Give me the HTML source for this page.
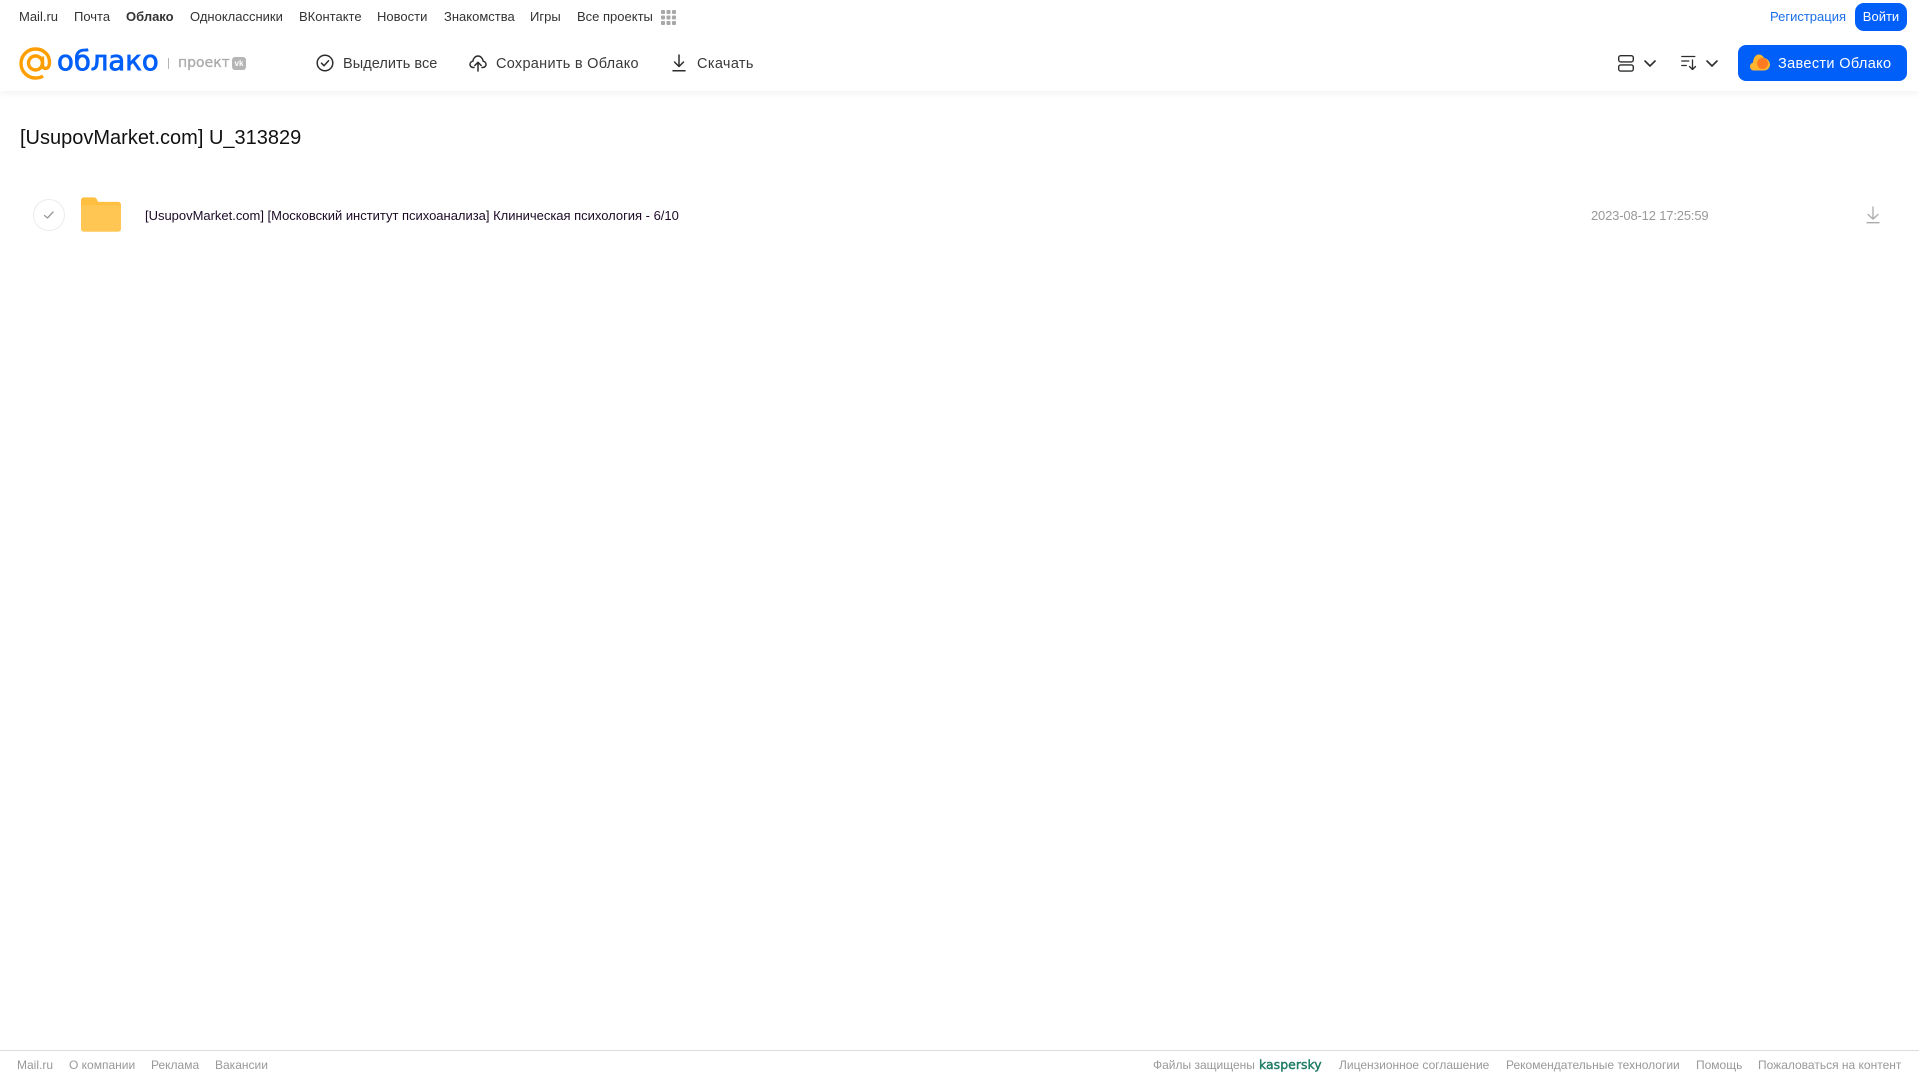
<!DOCTYPE html>
<html lang="ru">
<head>
<meta charset="utf-8">
<title>Облако</title>
<style>
html,body{margin:0;padding:0;background:#fff;}
body{width:1919px;height:1079px;position:relative;overflow:hidden;font-family:"Liberation Sans",Arial,sans-serif;}
.t{position:absolute;white-space:nowrap;line-height:20px;height:20px;}
.n{top:7px;font-size:13px;color:#333;}
.b{top:54px;font-size:14.5px;color:#3a3a3a;}
.f{top:1055px;font-size:12px;color:#999;}
svg{position:absolute;overflow:visible;}
#hd{position:absolute;left:0;top:0;width:1919px;height:91px;background:#fff;box-shadow:0 2px 8px rgba(0,0,0,.06);}
</style>
</head>
<body>
<div id="hd"></div>

<span class="t n" style="left:19px">Mail.ru</span>
<span class="t n" style="left:74px">Почта</span>
<span class="t n" style="left:126px;font-weight:bold">Облако</span>
<span class="t n" style="left:190px">Одноклассники</span>
<span class="t n" style="left:299px">ВКонтакте</span>
<span class="t n" style="left:377px">Новости</span>
<span class="t n" style="left:444px">Знакомства</span>
<span class="t n" style="left:530px">Игры</span>
<span class="t n" style="left:577px">Все проекты</span>
<svg style="left:661px;top:10px" width="15" height="15" viewBox="0 0 15 15" fill="#a8a8a8">
<rect x="0" y="0" width="4" height="4" rx="1"/><rect x="5.500" y="0" width="4" height="4" rx="1"/><rect x="11" y="0" width="4" height="4" rx="1"/>
<rect x="0" y="5.500" width="4" height="4" rx="1"/><rect x="5.500" y="5.500" width="4" height="4" rx="1"/><rect x="11" y="5.500" width="4" height="4" rx="1"/>
<rect x="0" y="11" width="4" height="4" rx="1"/><rect x="5.500" y="11" width="4" height="4" rx="1"/><rect x="11" y="11" width="4" height="4" rx="1"/>
</svg>

<span class="t n" style="left:1770px;color:#1a6fe8">Регистрация</span>
<div style="position:absolute;left:1855px;top:3px;width:52px;height:28px;border-radius:9px;background:#005ff9;color:#fff;font-size:13px;line-height:28px;text-align:center;">Войти</div>

<!-- logo -->
<svg style="left:19px;top:47px" width="33" height="33" viewBox="0 0 33 33" fill="none" stroke="#ff9e00" stroke-width="3.400">
<circle cx="16.500" cy="16" r="7"/>
<path d="M23.500 9.500v8.500c0 5 7 5 7-2.500C30.500 7.500 24.500 2 16.500 2S2 8.500 2 16.500 8.500 31 16.500 31c3 0 5.500-.7 7.500-2"/>
</svg>
<span class="t" style="left:57px;top:46px;height:30px;line-height:30px;font-family:'DejaVu Sans',sans-serif;font-size:27.500px;color:#005ff9;-webkit-text-stroke:.8px #005ff9;">облако</span>
<div style="position:absolute;left:168px;top:58px;width:1px;height:11px;background:#b5b5b5"></div>
<span class="t" style="left:178px;top:53px;font-family:'DejaVu Sans',sans-serif;font-size:14px;color:#aaa;-webkit-text-stroke:.3px #aaa;">проект</span>
<div style="position:absolute;left:232px;top:57px;width:14px;height:13px;border-radius:3px;background:#b5b5b5;color:#fff;font-size:8px;font-weight:bold;line-height:13px;text-align:center;">vk</div>

<!-- toolbar -->
<svg style="left:316px;top:54px" width="18" height="18" viewBox="0 0 18 18" fill="none" stroke="#2c2d2e" stroke-width="1.500">
<circle cx="9" cy="9" r="7.800"/><path d="M5.500 9.200l2.500 2.500 4.500-5" stroke-linecap="round" stroke-linejoin="round"/>
</svg>
<span class="t b" style="left:343px;letter-spacing:.05px">Выделить все</span>

<svg style="left:469px;top:54px" width="18" height="18" viewBox="0 0 18 18" fill="none" stroke="#2c2d2e" stroke-width="1.500" stroke-linecap="round" stroke-linejoin="round">
<path d="M5 13.500H4.200C2.400 13.500 1 12.100 1 10.400c0-1.600 1.200-2.900 2.800-3.100C4.300 4.200 6.400 2 9 2s4.700 2.200 5.200 5.300c1.600.2 2.800 1.500 2.800 3.100 0 1.700-1.400 3.100-3.200 3.100H13"/>
<path d="M9 17V8.500M5.800 11.500L9 8.300l3.200 3.200"/>
</svg>
<span class="t b" style="left:496px;letter-spacing:.28px">Сохранить в Облако</span>

<svg style="left:671px;top:54px" width="16" height="18" viewBox="0 0 16 18" fill="none" stroke="#2c2d2e" stroke-width="1.500" stroke-linecap="round" stroke-linejoin="round">
<path d="M8 1v11M3.500 8L8 12.500 12.500 8M2 16.800h12"/>
</svg>
<span class="t b" style="left:697px;letter-spacing:.35px">Скачать</span>

<!-- view + sort -->
<svg style="left:1618px;top:55px" width="16" height="17" viewBox="0 0 16 17" fill="none" stroke="#2c2d2e" stroke-width="1.400">
<rect x=".7" y=".7" width="14.600" height="6.200" rx="2"/><rect x=".7" y="9.900" width="14.600" height="6.200" rx="2"/>
</svg>
<svg style="left:1644px;top:60px" width="12" height="7" viewBox="0 0 12 7" fill="none" stroke="#2c2d2e" stroke-width="1.600" stroke-linecap="round" stroke-linejoin="round"><path d="M1 1l5 5 5-5"/></svg>
<svg style="left:1681px;top:55px" width="16" height="16" viewBox="0 0 16 16" fill="none" stroke="#2c2d2e" stroke-width="1.300" stroke-linecap="round" stroke-linejoin="round">
<path d="M.8 1.500h13M.8 6h7M.8 10.500h4.500M11.500 5v9.500M8.500 11.500l3 3 3-3"/>
</svg>
<svg style="left:1706px;top:60px" width="12" height="7" viewBox="0 0 12 7" fill="none" stroke="#2c2d2e" stroke-width="1.600" stroke-linecap="round" stroke-linejoin="round"><path d="M1 1l5 5 5-5"/></svg>

<div style="position:absolute;left:1738px;top:45px;width:169px;height:36px;border-radius:8px;background:#005ff9;"></div>
<svg style="left:1750px;top:54px" width="20" height="17" viewBox="0 0 20 17">
<path d="M4 16.500C1.800 16.500 0 14.800 0 12.500c0-1.900 1.300-3.500 3-3.900C3.300 4 5.500.5 8.800.5c2.400 0 4.300 1.500 5.200 3.500 3.300.4 6 3.300 6 6.500 0 3.300-2.700 6-6 6z" fill="#ffb52e"/>
<circle cx="12.500" cy="9.500" r="5.500" fill="#ff7a21"/>
</svg>
<span class="t" style="left:1778px;top:54px;font-size:14.500px;letter-spacing:.35px;color:#fff;">Завести Облако</span>

<!-- title -->
<span class="t" style="left:20px;top:125px;height:26px;line-height:26px;font-size:20px;color:#111;">[UsupovMarket.com] U_313829</span>

<!-- row -->
<div style="position:absolute;left:33px;top:199px;width:30px;height:30px;border:1px solid #ececec;border-radius:50%;"></div>
<svg style="left:43px;top:210px" width="12" height="10" viewBox="0 0 12 10" fill="none" stroke="#999" stroke-width="1.300" stroke-linecap="round" stroke-linejoin="round"><path d="M1.500 5.500l3 2.500 5.500-6"/></svg>
<svg style="left:81px;top:197px" width="40" height="35" viewBox="0 0 41 35">
<path d="M0 3C0 1.300 1.300 0 3 0h10c2 0 3 1 4 3.500.3.700.8 1 1.500 1H38c1.700 0 3 1.300 3 3V32c0 1.700-1.300 3-3 3H3c-1.700 0-3-1.300-3-3z" fill="#ffbf40"/>
<path d="M0 8h41v24c0 1.700-1.300 3-3 3H3c-1.700 0-3-1.300-3-3z" fill="#ffc654"/>
</svg>
<span class="t" style="left:145px;top:206px;font-size:13px;letter-spacing:-.015px;color:#1c0a26;">[UsupovMarket.com] [Московский институт психоанализа] Клиническая психология - 6/10</span>
<span class="t" style="left:1591px;top:206px;font-size:13px;letter-spacing:-.17px;color:#999;">2023-08-12 17:25:59</span>
<svg style="left:1866px;top:206px" width="14" height="18" viewBox="0 0 14 18" fill="none" stroke="#aaa" stroke-width="1.300" stroke-linecap="round" stroke-linejoin="round"><path d="M7 1v12M2 8.500L7 13l5-4.500M1 16.700h12"/></svg>

<!-- footer -->
<div style="position:absolute;left:0;top:1050px;width:1919px;height:1px;background:#dcdcdc;"></div>
<span class="t f" style="left:17px">Mail.ru</span>
<span class="t f" style="left:69px">О компании</span>
<span class="t f" style="left:151px">Реклама</span>
<span class="t f" style="left:215px">Вакансии</span>
<span class="t f" style="left:1153px">Файлы защищены</span>
<span class="t f" style="left:1259px;font-family:'DejaVu Sans',sans-serif;font-size:12.500px;color:#1d7a63;-webkit-text-stroke:.4px #1d7a63;">kaspersky</span>
<span class="t f" style="left:1339px">Лицензионное соглашение</span>
<span class="t f" style="left:1506px">Рекомендательные технологии</span>
<span class="t f" style="left:1696px">Помощь</span>
<span class="t f" style="left:1758px">Пожаловаться на контент</span>
</body>
</html>
